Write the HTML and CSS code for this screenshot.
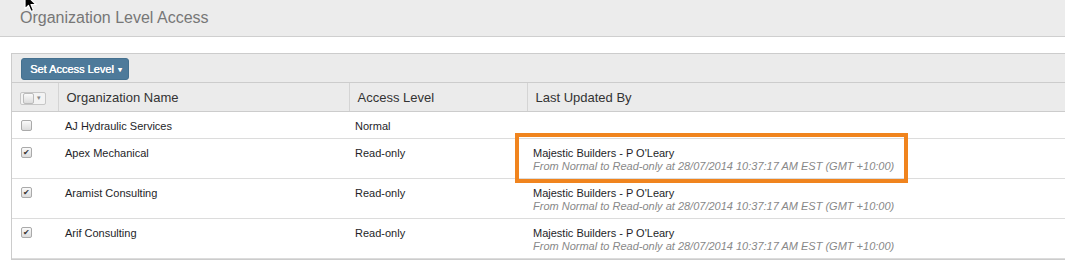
FILE: index.html
```html
<!DOCTYPE html>
<html>
<head>
  <title>Organization Level Access</title>
  <link rel="stylesheet" href="styles.css">
</head>
<body>
  <div class="page-header">
    <h1>Organization Level Access</h1>
  </div>

  <div class="panel">
    <div class="toolbar">
      <button class="btn-access">Set Access Level <span class="caret">&#9662;</span></button>
    </div>
    <table class="grid">
      <colgroup>
        <col class="c-check"><col class="c-name"><col class="c-level"><col class="c-updated">
      </colgroup>
      <tr class="head">
        <th class="check-col"><span class="select-all"><span class="box"></span><span class="mini-caret">&#9662;</span></span></th>
        <th>Organization Name</th>
        <th>Access Level</th>
        <th>Last Updated By</th>
      </tr>
      <tr>
        <td class="check-col"><span class="box"></span></td>
        <td class="name">AJ Hydraulic Services</td>
        <td>Normal</td>
        <td></td>
      </tr>
      <tr>
        <td class="check-col"><span class="box checked">&#10004;</span></td>
        <td class="name">Apex Mechanical</td>
        <td>Read-only</td>
        <td>Majestic Builders - P O'Leary<br><span class="change">From Normal to Read-only at 28/07/2014 10:37:17 AM EST (GMT +10:00)</span></td>
      </tr>
      <tr>
        <td class="check-col"><span class="box checked">&#10004;</span></td>
        <td class="name">Aramist Consulting</td>
        <td>Read-only</td>
        <td>Majestic Builders - P O'Leary<br><span class="change">From Normal to Read-only at 28/07/2014 10:37:17 AM EST (GMT +10:00)</span></td>
      </tr>
      <tr>
        <td class="check-col"><span class="box checked">&#10004;</span></td>
        <td class="name">Arif Consulting</td>
        <td>Read-only</td>
        <td>Majestic Builders - P O'Leary<br><span class="change">From Normal to Read-only at 28/07/2014 10:37:17 AM EST (GMT +10:00)</span></td>
      </tr>
    </table>
  </div>

  <!-- annotation + mouse pointer from the screenshot -->
  <div class="highlight"></div>
  <svg class="cursor" width="14" height="20" viewBox="0 0 14 20">
    <path d="M1 1 L1 16 L4.5 12.5 L7 18.5 L9.5 17.5 L7 11.5 L12 11.5 Z" fill="#000" stroke="#fff" stroke-width="1.2" stroke-linejoin="round"/>
  </svg>
</body>
</html>
```

FILE: styles.css
```css
body { margin: 0; font-family: "Liberation Sans", Arial, sans-serif; color: #222; background: #fff; overflow: hidden; position: relative; }

.page-header { height: 36px; background: #ececec; border-bottom: 1px solid #cfcfcf; }
.page-header h1 { margin: 0; padding: 9px 0 0 20px; font-size: 16px; font-weight: normal; color: #777; line-height: 18px; }

.panel { margin: 16px -40px 0 11px; border: 1px solid #ccc; border-right: none; }
.toolbar { height: 29px; background: #ebebeb; padding: 4px 0 0 9px; box-sizing: border-box; border-bottom: 1px solid #ccc; }
.btn-access { height: 22px; padding: 0 6px 0 8px; background: #4e7a9a; color: #fff; border: 1px solid #44708f; border-radius: 3px; font-family: inherit; font-size: 11px; font-weight: normal; text-shadow: 0.4px 0 0 #fff; }
.btn-access .caret { font-size: 8px; margin-left: 1px; vertical-align: 1px; }

.grid { width: 100%; border-collapse: collapse; table-layout: fixed; font-size: 11px; }
.c-check { width: 46px; }
.c-name { width: 291px; }
.c-level { width: 178px; }
.grid th { height: 28px; padding: 0 8px; background: #ebebeb; border-bottom: 1px solid #ccc; border-right: 1px solid #d4d4d4; font-size: 13px; font-weight: normal; text-align: left; color: #333; }
.grid td { padding: 8px 6px 5px; line-height: 13px; border-bottom: 1px solid #dcdcdc; vertical-align: top; color: #1e1e28; }
.grid td.name { padding-left: 7px; }
.grid .check-col { padding-left: 9px; }
.grid th.check-col { padding-left: 8px; }
.change { font-style: italic; color: #888; }

.box { display: inline-block; width: 9px; height: 9px; border: 1px solid #aaa; border-radius: 2px; background: linear-gradient(#fafafa, #dcdcdc); font-size: 8px; line-height: 9px; text-align: center; color: #333; vertical-align: top; margin-top: 0; }
.select-all { display: inline-flex; align-items: center; gap: 3px; width: 22px; height: 11px; padding: 0 0 0 2px; border: 1px solid #c6c6c6; border-radius: 2px; background: #f3f3f3; vertical-align: middle; }
.select-all .box { margin-top: 0; border-color: #bbb; }
.mini-caret { font-size: 7px; color: #888; }

.highlight { position: absolute; left: 515px; top: 133px; width: 385px; height: 42px; border: 4px solid #f0841e; }
.cursor { position: absolute; left: 24px; top: -7px; }
```
